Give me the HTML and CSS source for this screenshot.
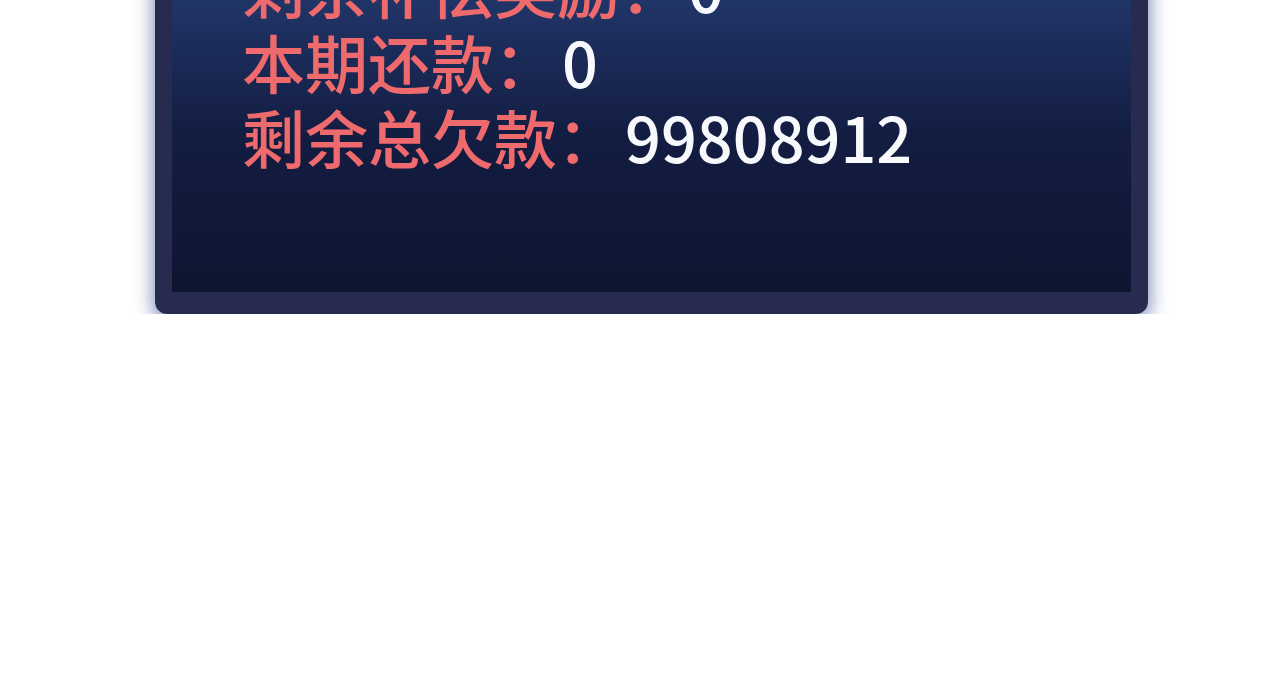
FILE: index.html
```html
<!DOCTYPE html>
<html lang="zh-CN">
<head>
    <meta charset="UTF-8">
    <meta name="viewport" content="width=device-width, initial-scale=1.0">
    <title>还款面板</title>
    <link rel="stylesheet" href="styles.css">
</head>
<body>
    <div class="panel">
        <div class="screen">
            <p class="row"><span class="label">剩余补偿奖励：</span><span class="value">0</span></p>
            <p class="row"><span class="label">本期还款：</span><span class="value">0</span></p>
            <p class="row"><span class="label">剩余总欠款：</span><span class="value">99808912</span></p>
        </div>
    </div>
</body>
</html>
```

FILE: styles.css
```css
body {
    margin: 0;
    background-color: #ffffff;
    font-family: "Noto Sans CJK SC", "Noto Sans", sans-serif;
    overflow: hidden;
}
.panel {
    width: 959px;
    margin: -120px 0 0 155px;
    border: 17px solid #272b50;
    border-bottom-width: 22px;
    border-radius: 0 0 12px 12px;
    box-shadow: 0 5px 18px 2px rgba(60, 80, 150, 0.65);
}
.screen {
    height: 395px;
    padding: 51px 0 0 70px;
    background: linear-gradient(to bottom, #2a4580 0%, #1f3263 30%, #131d42 60%, #0e1530 100%);
    box-sizing: border-box;
}
.row {
    display: flex;
    height: 75px;
    margin: 0;
    font-size: 63px;
    font-weight: 500;
    line-height: 75px;
    white-space: nowrap;
}
.label {
    color: #ef6a6c;
}
.value {
    margin-left: 5px;
    color: #f8f9fc;
}
```
